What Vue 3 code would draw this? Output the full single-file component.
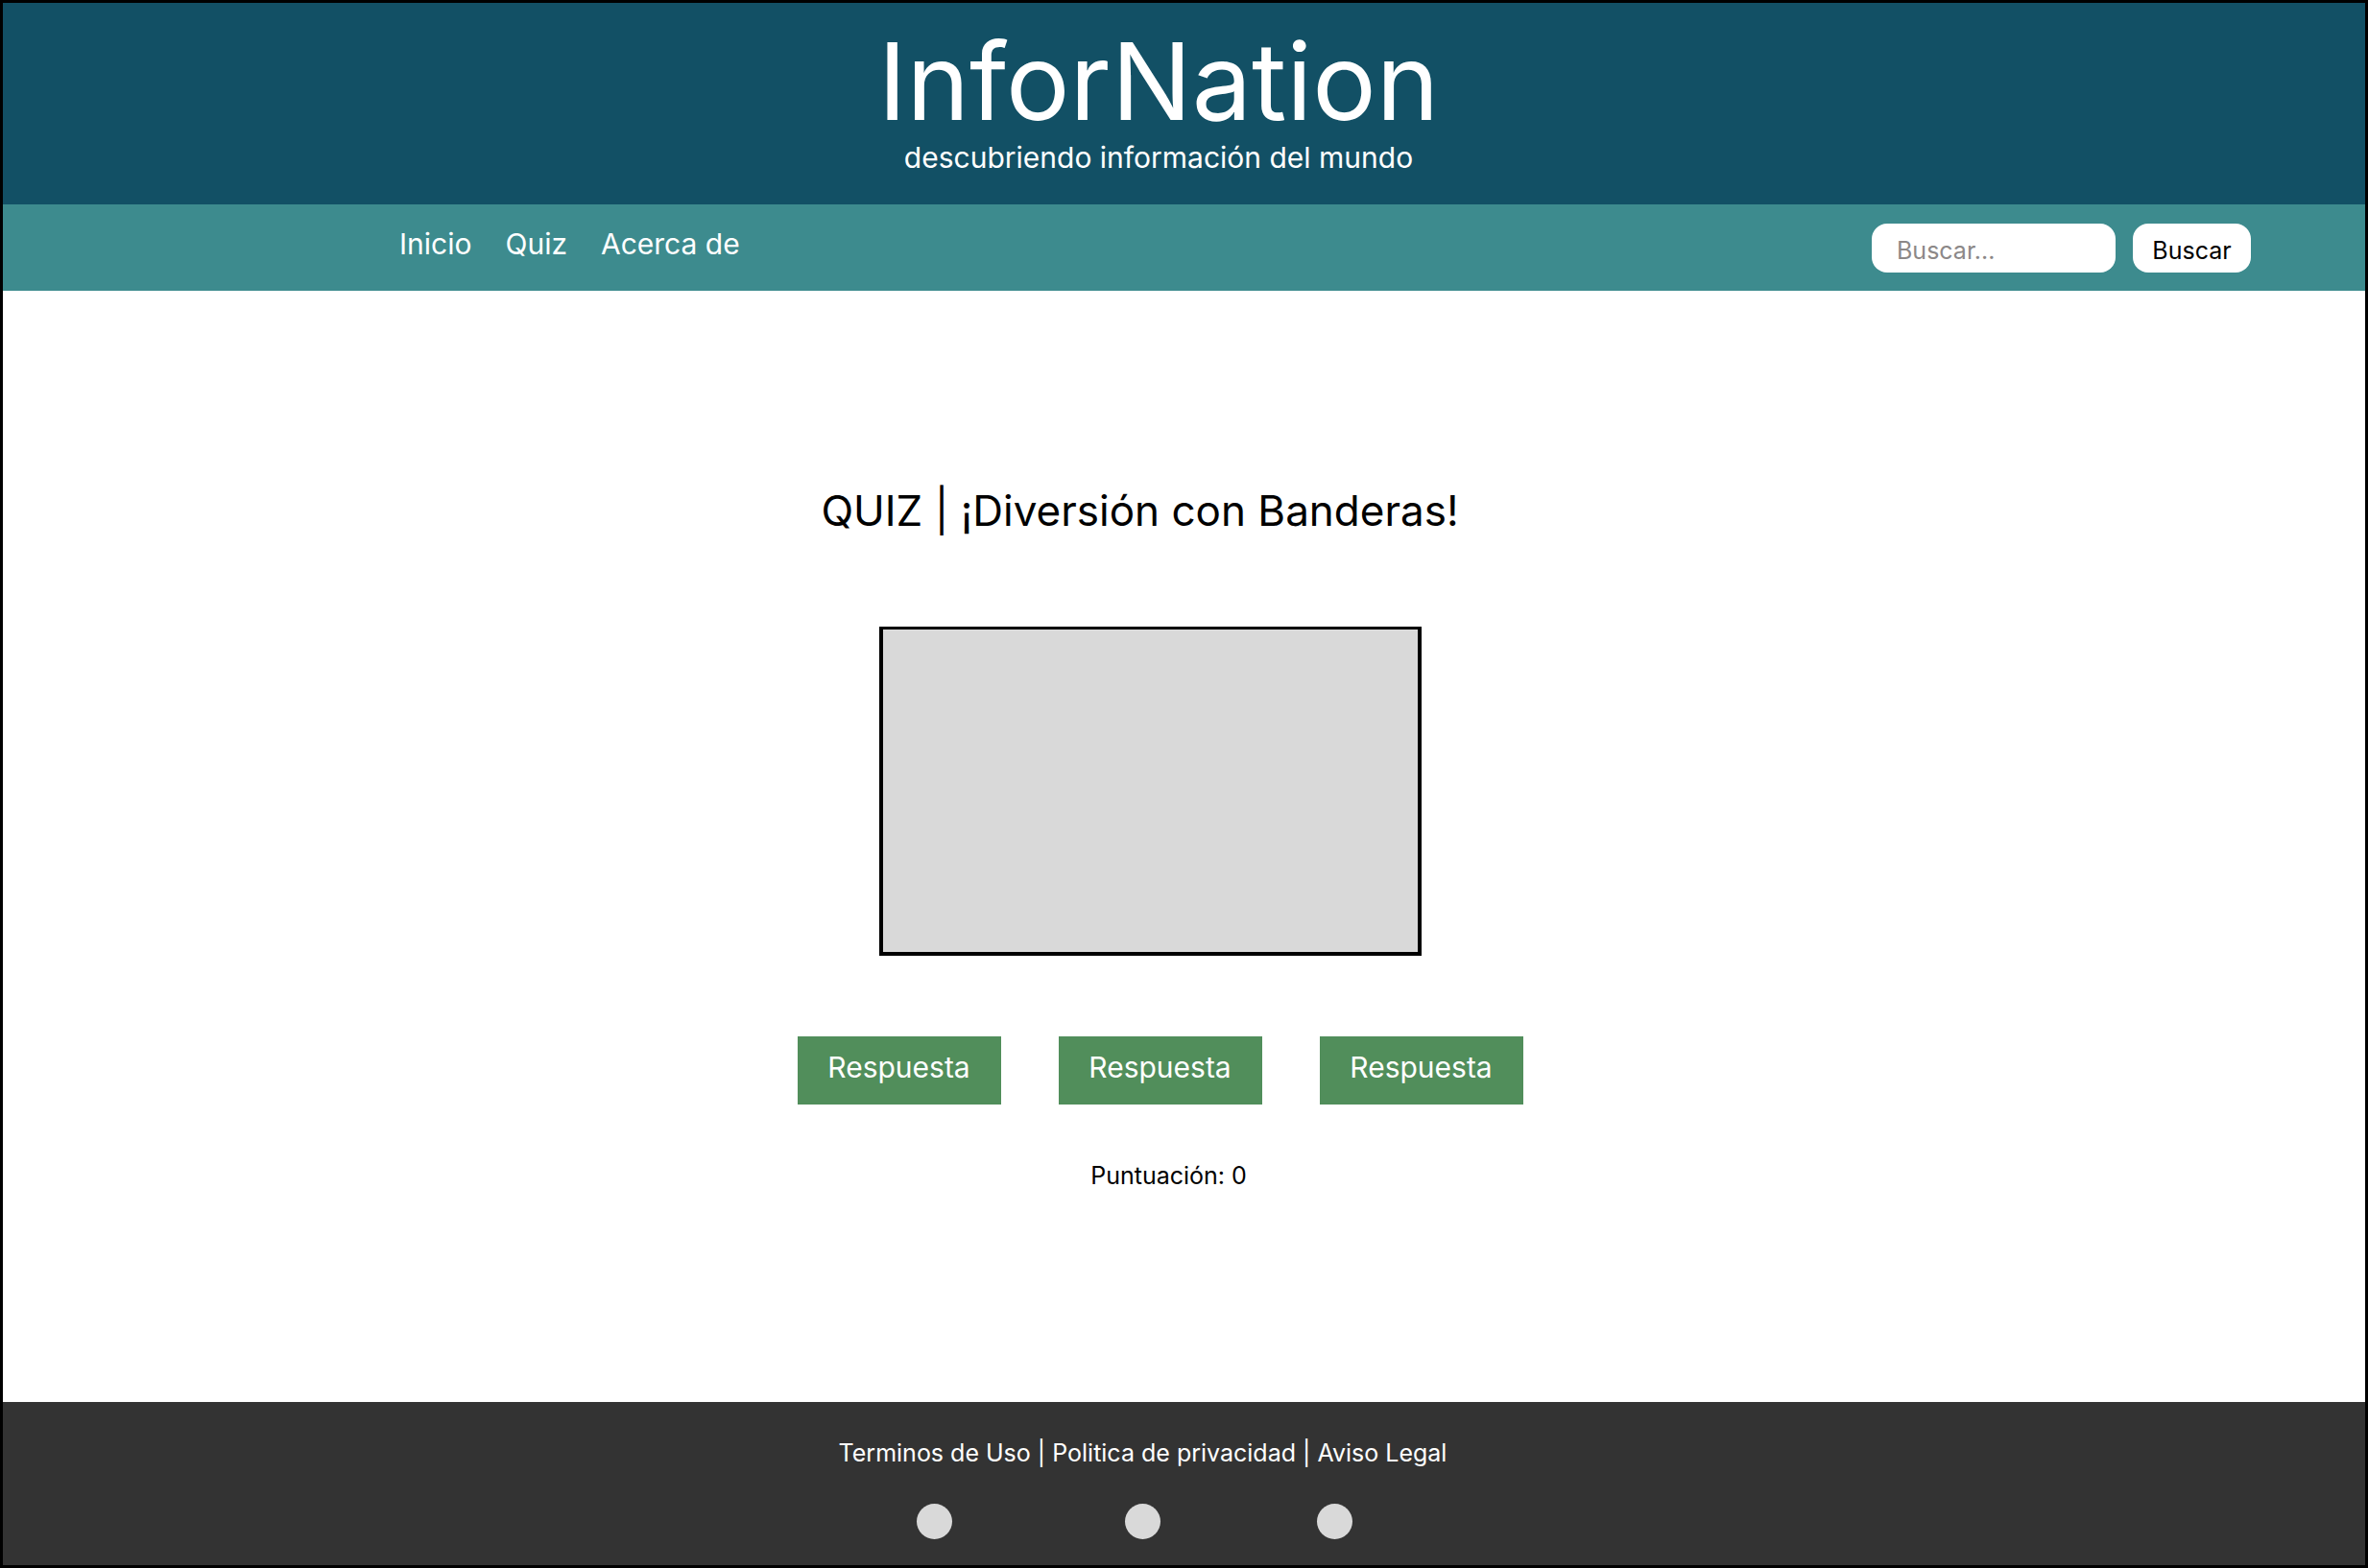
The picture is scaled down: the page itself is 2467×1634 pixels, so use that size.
<script setup>
import { ref } from 'vue'

const query = ref('')
const score = ref(0)
const sections = ['Inicio', 'Quiz', 'Acerca de']
const answers = ['Respuesta', 'Respuesta', 'Respuesta']
const legal = ['Terminos de Uso', 'Politica de privacidad', 'Aviso Legal']
const social = ['Red social 1', 'Red social 2', 'Red social 3']
</script>

<template>
  <div class="page">
    <header class="banner">
      <h1 class="brand">InforNation</h1>
      <p class="tagline">descubriendo información del mundo</p>
    </header>

    <div class="bar">
      <nav class="menu">
        <a v-for="item in sections" :key="item" href="#">{{ item }}</a>
      </nav>
      <form class="search" @submit.prevent>
        <input v-model="query" type="text" placeholder="Buscar..." aria-label="Buscar" />
        <button type="submit">Buscar</button>
      </form>
    </div>

    <main class="quiz">
      <h2 class="heading">QUIZ | ¡Diversión con Banderas!</h2>
      <div class="flag"></div>
      <div class="answers">
        <button v-for="(answer, i) in answers" :key="i" type="button">{{ answer }}</button>
      </div>
      <p class="score">Puntuación: {{ score }}</p>
    </main>

    <footer class="footer">
      <p class="legal">
        <template v-for="(item, i) in legal" :key="item"><template v-if="i"> | </template><a href="#">{{ item }}</a></template>
      </p>
      <div class="social">
        <a v-for="item in social" :key="item" href="#" :aria-label="item"></a>
      </div>
    </footer>
  </div>
</template>

<style>
body {
  margin: 0;
}
</style>

<style scoped>
.page {
  box-sizing: border-box;
  min-height: 100vh;
  display: flex;
  flex-direction: column;
  border: 3px solid #000;
  background: #fff;
  color: #000;
  font-family: Inter, "Liberation Sans", sans-serif;
  font-size: 25px;
  line-height: 32px;
}

h1,
h2,
p {
  margin: 0;
  font-weight: 400;
}

a {
  color: inherit;
  text-decoration: none;
}

button,
input {
  box-sizing: border-box;
  margin: 0;
  border: 0;
  font: inherit;
}

button {
  cursor: pointer;
}

.banner {
  padding: 22px 53px 30px 0;
  background: #125065;
  color: #fff;
  text-align: center;
}

.brand {
  font-size: 111px;
  line-height: 120px;
}

.tagline {
  font-size: 30px;
  line-height: 38px;
}

.bar {
  display: flex;
  justify-content: space-between;
  align-items: flex-start;
  padding: 20px 119px 19px 413px;
  background: #3d8b8e;
}

.menu {
  display: flex;
  gap: 35px;
  color: #fff;
  font-size: 30px;
  line-height: 42px;
}

.search {
  display: flex;
  gap: 18px;
}

.search input,
.search button {
  height: 51px;
  border-radius: 16px;
  background: #fff;
  color: #000;
}

.search input {
  width: 254px;
  padding: 4px 26px 0;
}

.search input::placeholder {
  color: #8c8888;
  opacity: 1;
}

.search button {
  width: 123px;
  padding: 4px 0 0;
}

.quiz {
  flex: 1;
  display: flex;
  flex-direction: column;
  align-items: center;
  padding: 200px 50px 40px 0;
}

.heading {
  margin-right: 42px;
  font-size: 44px;
  line-height: 58px;
}

.flag {
  box-sizing: border-box;
  width: 565px;
  height: 343px;
  margin: 92px 20px 84px 0;
  border: 4px solid #000;
  border-top-width: 3px;
  background: #d9d9d9;
}

.answers {
  display: flex;
  gap: 60px;
}

.answers button {
  width: 212px;
  height: 71px;
  padding: 0 0 8px;
  background: #518e5b;
  color: #fff;
  font-size: 30px;
}

.score {
  margin: 58px 0 0 18px;
}

.footer {
  display: flex;
  flex-direction: column;
  align-items: center;
  gap: 37px;
  padding: 37px 86px 27px 0;
  background: #333;
  color: #fff;
}

.social {
  display: grid;
  grid-template-columns: 217px 200px 37px;
  margin-right: 18px;
}

.social a {
  width: 37px;
  height: 37px;
  border-radius: 50%;
  background: #d9d9d9;
}
</style>
